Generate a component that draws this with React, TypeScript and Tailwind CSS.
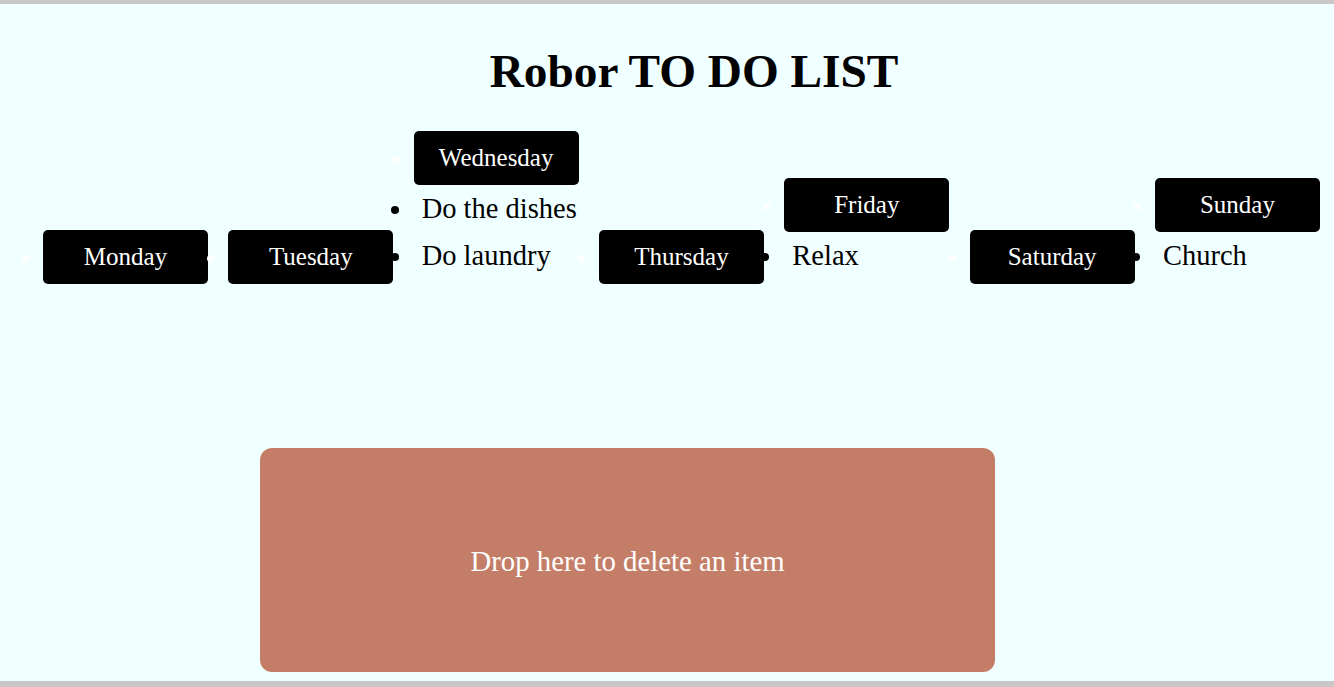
const days = [
  { name: "Monday", tasks: [] as string[] },
  { name: "Tuesday", tasks: [] as string[] },
  { name: "Wednesday", tasks: ["Do the dishes", "Do laundry"] },
  { name: "Thursday", tasks: [] as string[] },
  { name: "Friday", tasks: ["Relax"] },
  { name: "Saturday", tasks: [] as string[] },
  { name: "Sunday", tasks: ["Church"] },
]

function DayList({ name, tasks }: { name: string; tasks: string[] }) {
  return (
    <ul className="list-disc list-outside pl-5 w-[185.33px] shrink-0">
      <li className="text-[25px] marker:text-white">
        <div className="w-[165px] h-[54px] leading-[54px] bg-black text-white text-center rounded-[5px]">
          {name}
        </div>
      </li>
      {tasks.map((t) => (
        <li key={t} className="text-[28.5px] leading-[47px] text-black pl-2">
          {t}
        </li>
      ))}
    </ul>
  )
}

export default function App() {
  return (
    <div className="h-screen flex flex-col bg-[#f0ffff] border-t-4 border-b-[6px] border-[#c8c6c6] font-['Liberation_Serif',serif] text-black overflow-hidden">
      <h1 className="mt-10 pl-[54px] text-center text-[47.3px] leading-[54px] font-bold">
        Robor TO DO LIST
      </h1>
      <div className="flex items-baseline-last mt-[33px] pl-[23px]">
        {days.map((d) => (
          <DayList key={d.name} name={d.name} tasks={d.tasks} />
        ))}
      </div>
      <div className="mt-auto mb-[9px] ml-[260px] w-[735px] h-[224px] shrink-0 rounded-xl bg-[#c47e67] flex items-center justify-center">
        <span className="text-white text-[28.8px] pt-[3px]">Drop here to delete an item</span>
      </div>
    </div>
  )
}
